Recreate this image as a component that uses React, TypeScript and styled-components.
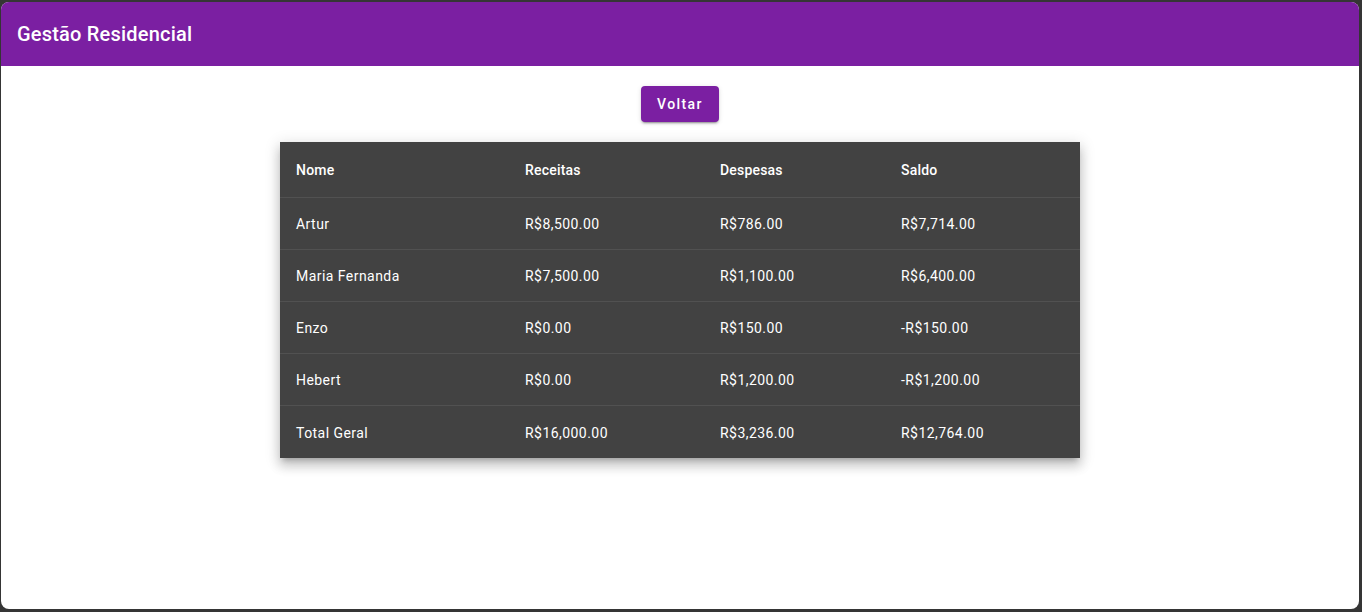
import React from "react";
import styled, { createGlobalStyle } from "styled-components";

const GlobalStyle = createGlobalStyle`
  html, body {
    margin: 0;
    padding: 0;
    background: #353535;
  }
  body {
    font-family: Roboto, "Liberation Sans", Arial, sans-serif;
  }
  * {
    box-sizing: border-box;
  }
`;

const Frame = styled.div`
  padding: 2px 3px 3px 1px;
  height: 612px;
`;

const Window = styled.div`
  height: 100%;
  background: #ffffff;
  border-radius: 8px;
  overflow: hidden;
  display: flex;
  flex-direction: column;
`;

const AppBar = styled.header`
  height: 64px;
  flex-shrink: 0;
  display: flex;
  align-items: center;
  padding: 0 16px;
  background-color: #7b1fa2;
  color: #fff;
`;

const Title = styled.h1`
  margin: 0;
  font-size: 20px;
  font-weight: 500;
  letter-spacing: 0.2px;
  line-height: 1.6;
`;

const Main = styled.main`
  display: flex;
  flex-direction: column;
  align-items: center;
  padding-top: 20px;
  gap: 20px;
`;

const Button = styled.button`
  height: 36px;
  padding: 6px 16px;
  border: 0;
  border-radius: 4px;
  background-color: #7b1fa2;
  color: #fff;
  font-family: Roboto, "Liberation Sans", Arial, sans-serif;
  font-size: 14px;
  font-weight: 500;
  letter-spacing: 0.1em;
  cursor: pointer;
  box-shadow: 0px 3px 1px -2px rgba(0, 0, 0, 0.2),
    0px 2px 2px 0px rgba(0, 0, 0, 0.14), 0px 1px 5px 0px rgba(0, 0, 0, 0.12);
`;

const Paper = styled.div`
  width: 800px;
  background-color: #424242;
  box-shadow: 0px 5px 5px -3px rgba(0, 0, 0, 0.2),
    0px 8px 10px 1px rgba(0, 0, 0, 0.14), 0px 3px 14px 2px rgba(0, 0, 0, 0.12);
`;

const Table = styled.table`
  width: 100%;
  border-collapse: collapse;
  table-layout: fixed;
  color: #fff;
  font-size: 14px;
`;

const HeadCell = styled.th<{ $w: number }>`
  width: ${(p) => p.$w}px;
  height: 55px;
  padding: 2px 16px 0;
  text-align: left;
  font-weight: 500;
  letter-spacing: 0.2px;
  border-bottom: 1px solid #515151;
`;

const Cell = styled.td<{ $last?: boolean }>`
  height: ${(p) => (p.$last ? 53 : 52)}px;
  padding: 2px 16px 0;
  font-weight: 400;
  letter-spacing: 0.45px;
  border-bottom: ${(p) => (p.$last ? "none" : "1px solid #515151")};
`;

const columns = [
  { label: "Nome", w: 229 },
  { label: "Receitas", w: 195 },
  { label: "Despesas", w: 181 },
  { label: "Saldo", w: 195 },
];

const rows = [
  ["Artur", "R$8,500.00", "R$786.00", "R$7,714.00"],
  ["Maria Fernanda", "R$7,500.00", "R$1,100.00", "R$6,400.00"],
  ["Enzo", "R$0.00", "R$150.00", "-R$150.00"],
  ["Hebert", "R$0.00", "R$1,200.00", "-R$1,200.00"],
  ["Total Geral", "R$16,000.00", "R$3,236.00", "R$12,764.00"],
];

export default function App() {
  return (
    <>
      <GlobalStyle />
      <Frame>
        <Window>
          <AppBar>
            <Title>Gestão Residencial</Title>
          </AppBar>
          <Main>
            <Button>Voltar</Button>
            <Paper>
              <Table>
                <thead>
                  <tr>
                    {columns.map((c) => (
                      <HeadCell key={c.label} $w={c.w}>
                        {c.label}
                      </HeadCell>
                    ))}
                  </tr>
                </thead>
                <tbody>
                  {rows.map((r, i) => (
                    <tr key={r[0]}>
                      {r.map((v, j) => (
                        <Cell key={j} $last={i === rows.length - 1}>
                          {v}
                        </Cell>
                      ))}
                    </tr>
                  ))}
                </tbody>
              </Table>
            </Paper>
          </Main>
        </Window>
      </Frame>
    </>
  );
}
